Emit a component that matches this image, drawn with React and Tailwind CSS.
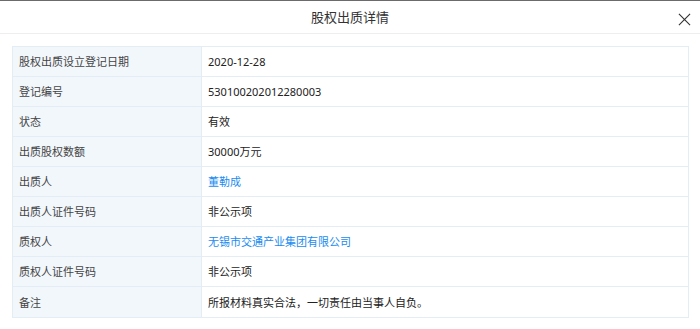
// Equity pledge detail dialog
const rows = [
  { label: "股权出质设立登记日期", value: "2020-12-28" },
  { label: "登记编号", value: "530100202012280003" },
  { label: "状态", value: "有效" },
  { label: "出质股权数额", value: "30000万元" },
  { label: "出质人", value: "董勒成", link: true },
  { label: "出质人证件号码", value: "非公示项" },
  { label: "质权人", value: "无锡市交通产业集团有限公司", link: true },
  { label: "质权人证件号码", value: "非公示项" },
  { label: "备注", value: "所报材料真实合法，一切责任由当事人自负。" },
];

export default function App() {
  return (
    <div
      className="w-[700px] h-[329px] bg-white border-t border-[#6b6b6b] overflow-hidden"
      style={{ fontFamily: '"Noto Sans", "Noto Sans CJK SC", sans-serif' }}
    >
      <div className="relative h-[33px] flex items-center justify-center border-b border-[#eeeeee]">
        <span className="text-[13px] text-[#333] pt-[2px]">股权出质详情</span>
        <button className="absolute right-[7px] top-[9px] w-[18px] h-[18px] flex items-center justify-center">
          <svg width="13" height="13" viewBox="0 0 14 14" fill="none" stroke="#333" strokeWidth="1.2">
            <path d="M1 1L13 13M13 1L1 13" />
          </svg>
        </button>
      </div>

      <div className="mx-[12px] mt-[12px] w-[677px] border border-[#e4edf6]">
        {rows.map((r, i) => (
          <div
            key={i}
            className={`flex h-[30px] text-[11px] ${i < rows.length - 1 ? "border-b border-[#e4edf6]" : ""}`}
          >
            <div className="w-[189px] shrink-0 bg-[#f2f7fc] border-r border-[#e4edf6] pl-[6px] pt-[2px] flex items-center text-[#444]">
              {r.label}
            </div>
            <div className={`pl-[6px] pt-[2px] flex items-center ${r.link ? "text-[#1a8cf0]" : "text-[#222]"}`}>
              {r.value}
            </div>
          </div>
        ))}
      </div>
    </div>
  );
}
